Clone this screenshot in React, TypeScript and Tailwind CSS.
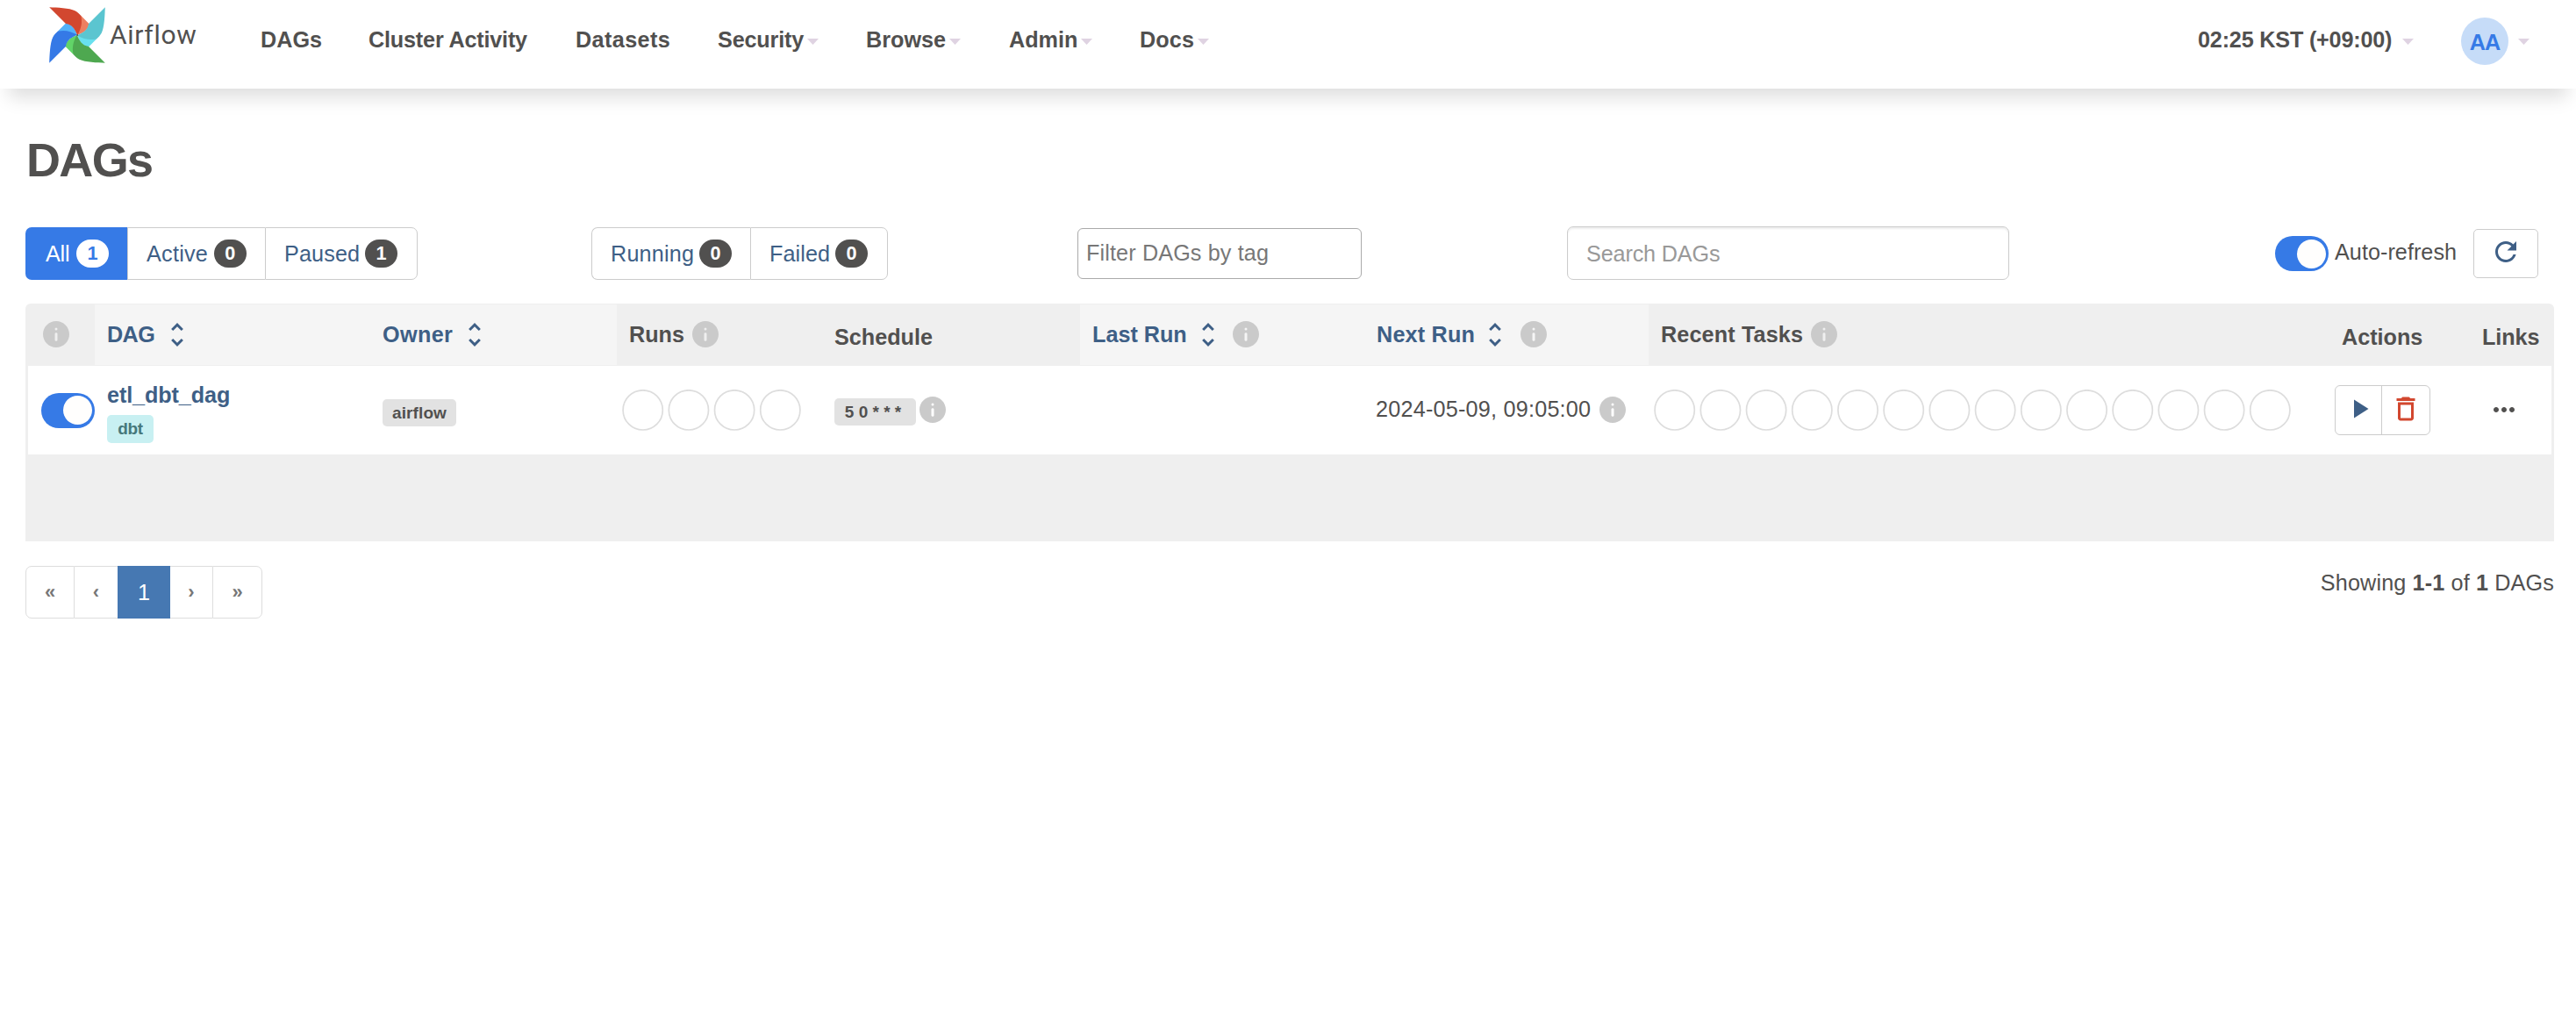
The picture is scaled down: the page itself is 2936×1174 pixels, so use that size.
import React from "react";

const BLADE_DARK =
  "M0.2 .2C9 .5 23 1 29.5 4.2C32.5 5.8 34.6 8 36.4 10C38 18 36.8 24 32.2 32.2C29.5 25.5 26.5 20 19 19Z";
const BLADE_LIGHT = "M36.2 9.8L45.4 19C44.8 26.5 38.5 29.5 32.2 32C34 24 36 17 36.2 9.8Z";

function Pinwheel() {
  const blades = [
    { angle: 0, dark: "#d2472f", light: "#ed7f60" },
    { angle: 90, dark: "#5bc5d0", light: "#68e0ee" },
    { angle: 180, dark: "#4ea850", light: "#62d468" },
    { angle: 270, dark: "#3579e6", light: "#52b2fa" },
  ];
  return (
    <svg viewBox="0 0 64 64" className="h-16 w-16 shrink-0">
      {blades.map((b) => (
        <path key={b.angle} d={BLADE_LIGHT} fill={b.light} transform={`rotate(${b.angle} 32 32)`} />
      ))}
      {blades.map((b) => (
        <path key={b.angle} d={BLADE_DARK} fill={b.dark} transform={`rotate(${b.angle} 32 32)`} />
      ))}
      <circle cx="32.2" cy="32" r="0.9" fill="#51504f" />
    </svg>
  );
}

function Caret({ className = "" }: { className?: string }) {
  return (
    <svg viewBox="0 0 13 7" className={`h-[7px] w-[13px] shrink-0 ${className}`}>
      <path d="M0 0H13L6.5 7Z" fill="#dfd3e2" />
    </svg>
  );
}

function Info({ className = "" }: { className?: string }) {
  return (
    <svg viewBox="2 2 20 20" className={`h-[30px] w-[30px] shrink-0 ${className}`}>
      <path
        fill="#cacaca"
        d="M12 2C6.48 2 2 6.48 2 12s4.48 10 10 10 10-4.48 10-10S17.52 2 12 2zm1 14.3a1 .8 0 0 1-2 0v-4.6a1 .8 0 0 1 2 0zm0-8.3a1 1 0 1 1-2 0a1 1 0 1 1 2 0z"
      />
    </svg>
  );
}

function Sort({ className = "" }: { className?: string }) {
  return (
    <svg viewBox="7.41 3 9.18 18" className={`h-[27px] w-[14px] shrink-0 ${className}`}>
      <path
        fill="#3e5f86"
        d="M12 5.83L15.17 9l1.41-1.41L12 3 7.41 7.59 8.83 9 12 5.83zm0 12.34L8.83 15l-1.41 1.41L12 21l4.59-4.59L15.17 15 12 18.17z"
      />
    </svg>
  );
}

function Icon({ d, className = "" }: { d: string; className?: string }) {
  return (
    <svg viewBox="0 0 24 24" fill="currentColor" className={`h-9 w-9 shrink-0 ${className}`}>
      <path d={d} />
    </svg>
  );
}

function Circles({ count }: { count: number }) {
  return (
    <svg className="h-12 shrink-0" width={count * 52.2} height={48}>
      {Array.from({ length: count }, (_, i) => (
        <circle key={i} cx={23.7 + i * 52.2} cy="23.4" r="22.6" fill="#fff" stroke="#dddddd" strokeWidth="1.7" />
      ))}
    </svg>
  );
}

function Toggle({ className = "" }: { className?: string }) {
  return (
    <div className={`flex h-10 w-[61px] shrink-0 items-center justify-end rounded-full bg-[#367ae6] pr-[3px] ${className}`}>
      <div className="h-[33px] w-[33px] rounded-full bg-[#fffefd]" />
    </div>
  );
}

function Count({ n, active }: { n: number; active?: boolean }) {
  return (
    <span
      className={`block h-8 w-[37px] rounded-full text-center text-[21.6px] leading-[31px] font-bold ${
        active ? "bg-white text-[#367ae6]" : "bg-[#51504f] text-white"
      }`}
    >
      {n}
    </span>
  );
}

function Tag({ children, className = "" }: { children: React.ReactNode; className?: string }) {
  return (
    <span className={`flex shrink-0 items-center justify-center rounded-[5px] text-[19px] font-bold whitespace-pre ${className}`}>
      {children}
    </span>
  );
}

const NAV = [
  { label: "DAGs", cls: "w-[123px]" },
  { label: "Cluster Activity", cls: "w-[236px] tracking-[-0.18px]" },
  { label: "Datasets", cls: "w-[162px] tracking-[0.4px]" },
  { label: "Security", cls: "w-[169px] tracking-[-0.15px]", menu: true },
  { label: "Browse", cls: "w-[163px]", menu: true },
  { label: "Admin", cls: "w-[149px]", menu: true },
  { label: "Docs", cls: "w-[90px] tracking-[0.1px]", menu: true },
];

function Header() {
  return (
    <header className="relative flex h-[101px] items-start bg-white pr-[53px] pl-14 font-bold shadow-[0_20px_20px_-10px_rgba(0,0,0,0.135)]">
      <a className="mt-2 flex w-[241px] items-start">
        <Pinwheel />
        <span className="mt-[14px] ml-[5px] font-[Roboto,sans-serif] text-[30px] leading-9 font-normal tracking-[0.7px]">
          Airflow
        </span>
      </a>
      <nav className="mt-[27px] flex">
        {NAV.map((n) => (
          <a key={n.label} className={`flex h-9 items-center ${n.cls}`}>
            {n.label}
            {n.menu && <Caret className="mt-[5px] ml-1" />}
          </a>
        ))}
      </nav>
      <div className="mt-5 ml-auto flex h-[54px] items-center">
        <span className="mb-1 w-[222px] tracking-[-0.19px] whitespace-nowrap">02:25 KST (+09:00)</span>
        <Caret className="ml-[11px]" />
        <span className="ml-[54px] flex h-[54px] w-[54px] items-center justify-center rounded-full bg-[#c6dcf8] pt-px tracking-[-1px] text-[#367ae6]">
          AA
        </span>
        <Caret className="ml-[11px]" />
      </div>
    </header>
  );
}

function Toolbar() {
  return (
    <div className="mt-[45px] flex h-[61px] items-end">
      <div className="flex h-[60px] w-[447px] text-[#3e5f86]">
        <div className="flex w-[116px] items-center justify-between rounded-l-[7px] bg-[#367ae6] pr-[21px] pl-[23px] tracking-[-0.2px] text-white">
          All <Count n={1} active />
        </div>
        <div className="flex w-[157px] items-center justify-between border-y border-l border-[#cccccc] bg-white pr-[21px] pl-[21px] tracking-[0.25px]">
          Active <Count n={0} />
        </div>
        <div className="flex w-[174px] items-center justify-between rounded-r-[7px] border border-[#cccccc] bg-white pr-[22px] pl-[21px] tracking-[0.12px]">
          Paused <Count n={1} />
        </div>
      </div>
      <div className="ml-[198px] flex h-[60px] w-[338px] text-[#3e5f86]">
        <div className="flex w-[181px] items-center justify-between rounded-l-[7px] border-y border-l border-[#cccccc] bg-white pr-[21px] pl-[21px] tracking-[0.2px]">
          Running <Count n={0} />
        </div>
        <div className="flex w-[157px] items-center justify-between rounded-r-[7px] border border-[#cccccc] bg-white pr-[22px] pl-[21px] tracking-[0.1px]">
          Failed <Count n={0} />
        </div>
      </div>
      <div className="mb-px ml-[216px] flex h-[58px] w-[324px] items-center rounded-[6px] border border-[#aaaaaa] bg-white pb-[2px] pl-[9px] tracking-[0.13px] text-[#777777]">
        Filter DAGs by tag
      </div>
      <div className="ml-[234px] flex h-[61px] w-[504px] items-center rounded-[7px] border border-[#cccccc] bg-white pl-[21px] tracking-[-0.14px] text-[#999999] shadow-[inset_0_2px_2px_rgba(0,0,0,0.07)]">
        Search DAGs
      </div>
      <Toggle className="mb-[10px] ml-[303px]" />
      <span className="mb-[14px] ml-[7px] w-[158px] tracking-[0.04px]">Auto-refresh</span>
      <button className="mb-[2px] flex h-14 w-[74px] items-center justify-center rounded-[5px] border border-[#cccccc] bg-white pb-1 text-[#3e5f86]">
        <Icon d="M17.65 6.35C16.2 4.9 14.21 4 12 4c-4.42 0-7.99 3.58-7.99 8s3.57 8 7.99 8c3.73 0 6.84-2.55 7.73-6h-2.08c-.82 2.33-3.04 4-5.65 4-3.31 0-6-2.69-6-6s2.69-6 6-6c1.66 0 3.14.69 4.22 1.78L13 11h7V4l-2.35 2.35z" />
      </button>
    </div>
  );
}

const COLS = "grid grid-cols-[79px_313px_282px_233px_295px_323px_325px_775px_162px_95px]";
const SORTABLE = "flex items-center bg-[#f5f5f5] pb-px text-[#3e5f86]";

function Table() {
  return (
    <div className="mt-[27px] w-[2882px] rounded-t-[6px] bg-[#efefef]">
      <div className={`${COLS} h-[71px] py-px font-bold whitespace-nowrap`}>
        <div className="flex items-center pb-px pl-5">
          <Info />
        </div>
        <div className={`${SORTABLE} pl-[14px]`}>
          <span className="w-[73px] tracking-[-0.6px]">DAG</span>
          <Sort />
        </div>
        <div className={`${SORTABLE} pl-[15px]`}>
          <span className="w-[98px] tracking-[0.36px]">Owner</span>
          <Sort />
        </div>
        <div className="flex items-center pb-px pl-[14px]">
          <span className="w-[72px]">Runs</span>
          <Info />
        </div>
        <div className="flex items-center pt-[5px] pl-[15px]">Schedule</div>
        <div className={`${SORTABLE} pl-[14px]`}>
          <span className="w-[125px]">Last Run</span>
          <Sort />
          <Info className="ml-[21px]" />
        </div>
        <div className={`${SORTABLE} pl-[15px]`}>
          <span className="w-[128px] tracking-[0.2px]">Next Run</span>
          <Sort />
          <Info className="ml-[22px]" />
        </div>
        <div className="flex items-center pb-px pl-[14px]">
          <span className="w-[171px] tracking-[0.13px]">Recent Tasks</span>
          <Info />
        </div>
        <div className="flex items-center pt-[5px] pl-[15px]">Actions</div>
        <div className="flex items-center pt-[5px] pl-[13px] tracking-[-0.1px]">Links</div>
      </div>

      <div className={`${COLS} h-[101px] bg-white shadow-[inset_3px_0_0_#efefef,inset_-3px_0_0_#efefef]`}>
        <div className="flex items-center pl-[18px]">
          <Toggle />
        </div>
        <div className="flex flex-col items-start pt-[15px] pl-[14px]">
          <span className="font-bold tracking-[-0.1px] text-[#3e5f86]">etl_dbt_dag</span>
          <Tag className="mt-[5px] h-8 w-[53px] bg-[#c8f0f2] tracking-[-0.3px] text-[#46787b]">dbt</Tag>
        </div>
        <div className="flex items-center pt-[6px] pl-[15px]">
          <Tag className="h-[31px] w-[84px] bg-[#e2e2e2] tracking-[0.1px]">airflow</Tag>
        </div>
        <div className="flex items-center pl-[6px]">
          <Circles count={4} />
        </div>
        <div className="flex items-center pl-[15px]">
          <Tag className="mt-1 h-[31px] w-[93px] bg-[#e2e2e2] pr-[5px]">5 0 * * *</Tag>
          <Info className="mb-px ml-[4px]" />
        </div>
        <div />
        <div className="flex items-center pb-[3px] pl-[14px]">
          <span className="w-[255px] tracking-[0.22px] whitespace-nowrap">2024-05-09, 09:05:00</span>
          <Info className="mt-px" />
        </div>
        <div className="flex items-center pl-[6px]">
          <Circles count={14} />
        </div>
        <div className="flex items-center pl-[7px]">
          <div className="flex h-[57px] w-[109px] items-center rounded-[6px] border border-[#cccccc]">
            <div className="flex h-full w-[53px] items-center border-r border-[#cccccc] pb-[3px] pl-[9px] text-[#3e5f86]">
              <Icon d="M8 5v14l11-7z" />
            </div>
            <div className="flex h-full items-center pb-[3px] pl-[9px] text-[#d2472f]">
              <Icon d="M6 19c0 1.1.9 2 2 2h8c1.1 0 2-.9 2-2V7H6v12zM8 9h8v10H8V9zm7.5-5l-1-1h-5l-1 1H5v2h14V4h-3.5z" />
            </div>
          </div>
        </div>
        <div className="flex items-center pb-px pl-5">
          <Icon d="M6 10c-1.1 0-2 .9-2 2s.9 2 2 2 2-.9 2-2-.9-2-2-2zm12 0c-1.1 0-2 .9-2 2s.9 2 2 2 2-.9 2-2-.9-2-2-2zm-6 0c-1.1 0-2 .9-2 2s.9 2 2 2 2-.9 2-2-.9-2-2-2z" />
        </div>
      </div>
      <div className="h-[99px]" />
    </div>
  );
}

function Pager() {
  const cell = "flex h-full items-center justify-center border-y border-[#dddddd] bg-white";
  const arrow = "text-[22px] font-bold text-[#777777]";
  return (
    <div className="mt-7 flex w-[2882px] items-start justify-between">
      <div className="flex h-[60px] w-[270px]">
        <a className={`${cell} ${arrow} w-14 rounded-l-[7px] border-x`}>«</a>
        <a className={`${cell} ${arrow} w-[49px]`}>‹</a>
        <a className="flex w-[60px] items-center justify-center bg-[#4678b2] text-white">1</a>
        <a className={`${cell} ${arrow} w-12`}>›</a>
        <a className={`${cell} ${arrow} w-[57px] rounded-r-[7px] border-x`}>»</a>
      </div>
      <p className="mt-px tracking-[0.14px]">
        Showing <b>1-1</b> of <b>1</b> DAGs
      </p>
    </div>
  );
}

export default function App() {
  return (
    <div className="min-h-screen w-[2936px] overflow-hidden bg-white font-['Liberation_Sans',Arial,sans-serif] text-[25.2px] leading-9 text-[#51504f]">
      <Header />
      <main className="pl-[29px]">
        <h1 className="pt-[51px] pb-px pl-px text-[54px] leading-[60px] font-bold tracking-[-1.67px]">DAGs</h1>
        <Toolbar />
        <Table />
        <Pager />
      </main>
    </div>
  );
}
